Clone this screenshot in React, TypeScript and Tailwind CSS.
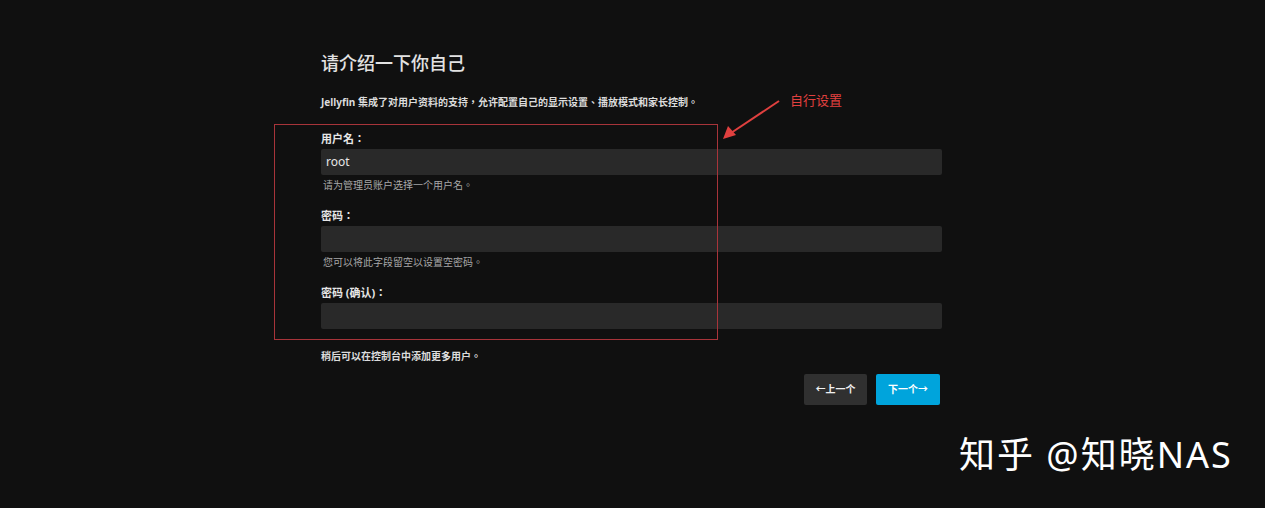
import React from 'react';

const FONT = { fontFamily: '"Noto Sans", "Noto Sans CJK TC", sans-serif' };

function Field({ label, value, help }: { label: string; value?: string; help?: string }) {
  return (
    <div>
      <div className="text-[11px] font-bold leading-[16px] text-[#e6e6e6]">{label}</div>
      <div className="mt-[2px] flex h-[26px] items-center rounded-[2px] bg-[#292929] px-[5px] text-[12px] text-[#e6e6e6]">
        {value}
      </div>
      {help && <div className="mt-[2px] pl-[2px] text-[10px] leading-[16px] text-[#a8a8a8]">{help}</div>}
    </div>
  );
}

export default function App() {
  return (
    <div className="relative h-[508px] w-full overflow-hidden bg-[#101010]" style={FONT}>
      <div className="ml-[321px] w-[621px] pt-[51px]">
        <h1 className="text-[18px] font-medium leading-[24px] text-[#e2e2e2]">请介绍一下你自己</h1>
        <p className="mt-[19px] text-[10px] font-bold leading-[16px] text-[#dcdcdc]">
          Jellyfin 集成了对用户资料的支持，允许配置自己的显示设置、播放模式和家长控制。
        </p>
        <div className="mt-[21px]">
          <Field label="用户名：" value="root" help="请为管理员账户选择一个用户名。" />
        </div>
        <div className="mt-[15px]">
          <Field label="密码：" help="您可以将此字段留空以设置空密码。" />
        </div>
        <div className="mt-[15px]">
          <Field label="密码 (确认)：" />
        </div>
        <p className="mt-[19px] text-[10px] font-bold leading-[16px] text-[#dcdcdc]">稍后可以在控制台中添加更多用户。</p>
        <div className="mt-[10px] flex justify-end gap-[9px] pr-[2px]">
          <button className="flex h-[31px] w-[63px] items-center justify-center rounded-[2px] bg-[#303030] text-[10px] font-bold text-[#f0f0f0]">
            ←上一个
          </button>
          <button className="flex h-[31px] w-[64px] items-center justify-center rounded-[2px] bg-[#00a4dc] text-[10px] font-bold text-white">
            下一个→
          </button>
        </div>
      </div>

      {/* annotation */}
      <div className="absolute left-[274px] top-[124px] h-[216px] w-[444px] border border-[#a8343a]" />
      <svg className="absolute left-[715px] top-[95px]" width="75" height="52" viewBox="0 0 75 52">
        <path d="M64 6 L16 38" stroke="#e0403f" strokeWidth="2" fill="none" />
        <path d="M8 44 L13 31 L21 40 Z" fill="#e0403f" />
      </svg>
      <div className="absolute left-[790px] top-[91px] text-[13px] leading-[18px] text-[#e0403f]">自行设置</div>

      <div className="absolute left-[959px] top-[431px] text-[36px] leading-[48px] tracking-[2px] text-white">
        知乎 @知晓NAS
      </div>
    </div>
  );
}
